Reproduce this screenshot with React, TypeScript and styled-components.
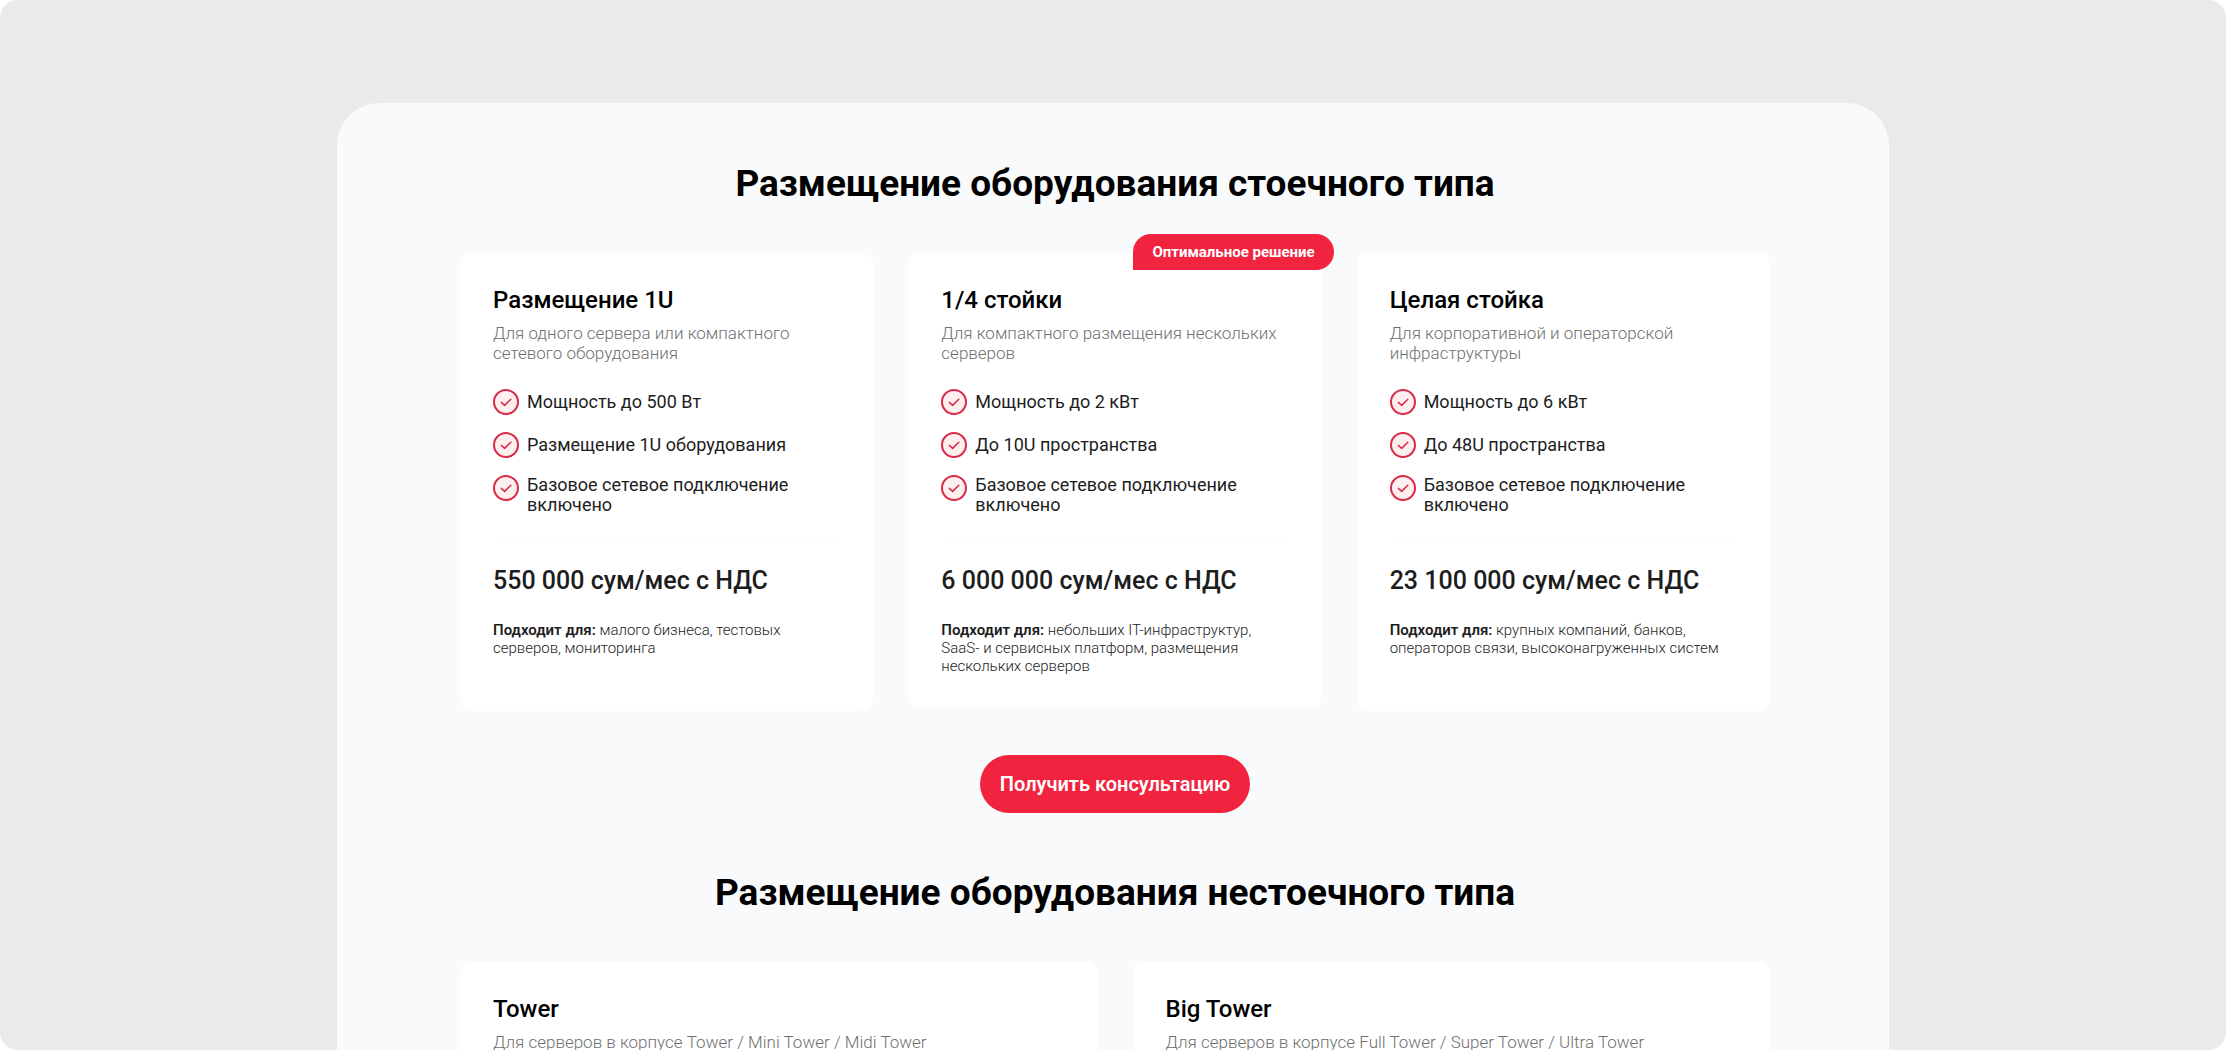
import React from "react";
import styled, { createGlobalStyle, css } from "styled-components";

const GlobalStyle = createGlobalStyle`
  *, *::before, *::after { box-sizing: border-box; }
  body {
    margin: 0;
    background: #ffffff;
    color: #1d1d1d;
    font-family: Roboto, "Noto Sans", sans-serif;
  }
  h2, h3, p, ul { margin: 0; padding: 0; }
`;

const Frame = styled.div`
  height: 100vh;
  padding: 103px 337px 0;
  overflow: hidden;
  border-radius: 18px;
  background: #eaeaea;

  @media (max-width: 1800px) {
    padding: 64px 32px 0;
  }
`;

const Panel = styled.main`
  min-height: 100%;
  padding: 60px 119px 0 123px;
  border-radius: 42px 42px 0 0;
  background: #f9fafc;

  @media (max-width: 1400px) {
    padding: 48px 32px 0;
  }
`;

const Section = styled.section`
  display: flex;
  flex-direction: column;
  align-items: center;

  & + & {
    margin-top: 59px;
  }
`;

const Heading = styled.h2`
  margin-bottom: 48px;
  color: #000000;
  font-size: 37px;
  font-weight: 700;
  line-height: 42px;
  text-align: center;
`;

const Cards = styled.div<{ $columns: number }>`
  display: grid;
  grid-template-columns: repeat(${({ $columns }) => $columns}, minmax(0, 1fr));
  gap: 35px;
  align-items: start;
  width: 100%;
`;

const Card = styled.article<{ $featured?: boolean }>`
  position: relative;
  padding: 33px 33px 32px;
  border-radius: 12px;
  background: #ffffff;
  ${({ $featured }) =>
    !$featured &&
    css`
      min-height: 458px;
    `}
`;

const Badge = styled.span`
  position: absolute;
  top: -19px;
  right: -12px;
  padding: 0 19px;
  border-radius: 18px 18px 18px 0;
  background: #f1233e;
  color: #ffffff;
  font-size: 15px;
  font-weight: 700;
  line-height: 36px;
`;

const CardTitle = styled.h3`
  color: #000000;
  font-size: 24px;
  font-weight: 500;
  line-height: 28px;
`;

const Description = styled.p`
  margin-top: 9px;
  color: #6f6f6f;
  font-size: 17px;
  font-weight: 300;
  line-height: 20px;
`;

const Features = styled.ul`
  display: flex;
  flex-direction: column;
  gap: 17px;
  margin-top: 26px;
  list-style: none;
`;

const Feature = styled.li`
  display: flex;
  align-items: flex-start;
  gap: 8px;
  font-size: 18px;
  line-height: 20px;
`;

const FeatureText = styled.span`
  display: flex;
  align-items: center;
  min-height: 26px;
`;

const CheckIcon = styled.svg`
  flex: none;
  width: 26px;
  height: 26px;
`;

const Price = styled.p`
  margin-top: 24px;
  padding-top: 27px;
  border-top: 1px solid #fcfcfc;
  font-size: 25px;
  font-weight: 500;
  line-height: 28px;
`;

const Audience = styled.p`
  margin-top: 26px;
  font-size: 15px;
  font-weight: 300;
  line-height: 18px;

  strong {
    font-weight: 600;
  }
`;

const CallToAction = styled.button`
  height: 58px;
  margin-top: 44px;
  padding: 0 20px;
  border: 0;
  border-radius: 29px;
  background: #f1233e;
  color: #ffffff;
  font-family: inherit;
  font-size: 20px;
  font-weight: 600;
  cursor: pointer;
`;

function Check() {
  return (
    <CheckIcon viewBox="0 0 26 26" fill="none" aria-hidden="true">
      <circle cx="13" cy="13" r="12" fill="#fdeef0" stroke="#d92b47" strokeWidth="2" />
      <path
        d="M8.4 13.4 11.6 16.4 17.8 10.2"
        stroke="#d92b47"
        strokeWidth="1.5"
        strokeLinecap="round"
        strokeLinejoin="round"
      />
    </CheckIcon>
  );
}

type Plan = {
  title: string;
  description: string;
  features?: string[];
  price?: string;
  audience?: string;
  badge?: string;
};

const rackPlans: Plan[] = [
  {
    title: "Размещение 1U",
    description: "Для одного сервера или компактного сетевого оборудования",
    features: ["Мощность до 500 Вт", "Размещение 1U оборудования", "Базовое сетевое подключение включено"],
    price: "550 000 сум/мес с НДС",
    audience: "малого бизнеса, тестовых серверов, мониторинга",
  },
  {
    title: "1/4 стойки",
    description: "Для компактного размещения нескольких серверов",
    features: ["Мощность до 2 кВт", "До 10U пространства", "Базовое сетевое подключение включено"],
    price: "6 000 000 сум/мес с НДС",
    audience: "небольших IT-инфраструктур, SaaS- и сервисных платформ, размещения нескольких серверов",
    badge: "Оптимальное решение",
  },
  {
    title: "Целая стойка",
    description: "Для корпоративной и операторской инфраструктуры",
    features: ["Мощность до 6 кВт", "До 48U пространства", "Базовое сетевое подключение включено"],
    price: "23 100 000 сум/мес с НДС",
    audience: "крупных компаний, банков, операторов связи, высоконагруженных систем",
  },
];

const towerPlans: Plan[] = [
  { title: "Tower", description: "Для серверов в корпусе Tower / Mini Tower / Midi Tower" },
  { title: "Big Tower", description: "Для серверов в корпусе Full Tower / Super Tower / Ultra Tower" },
];

function PlanCard({ plan }: { plan: Plan }) {
  return (
    <Card $featured={Boolean(plan.badge)}>
      {plan.badge && <Badge>{plan.badge}</Badge>}
      <CardTitle>{plan.title}</CardTitle>
      <Description>{plan.description}</Description>
      {plan.features && (
        <Features>
          {plan.features.map((feature) => (
            <Feature key={feature}>
              <Check />
              <FeatureText>{feature}</FeatureText>
            </Feature>
          ))}
        </Features>
      )}
      {plan.price && <Price>{plan.price}</Price>}
      {plan.audience && (
        <Audience>
          <strong>Подходит для:</strong> {plan.audience}
        </Audience>
      )}
    </Card>
  );
}

export default function App() {
  return (
    <>
      <GlobalStyle />
      <Frame>
        <Panel>
          <Section>
            <Heading>Размещение оборудования стоечного типа</Heading>
            <Cards $columns={3}>
              {rackPlans.map((plan) => (
                <PlanCard key={plan.title} plan={plan} />
              ))}
            </Cards>
            <CallToAction type="button">Получить консультацию</CallToAction>
          </Section>
          <Section>
            <Heading>Размещение оборудования нестоечного типа</Heading>
            <Cards $columns={2}>
              {towerPlans.map((plan) => (
                <PlanCard key={plan.title} plan={plan} />
              ))}
            </Cards>
          </Section>
        </Panel>
      </Frame>
    </>
  );
}
